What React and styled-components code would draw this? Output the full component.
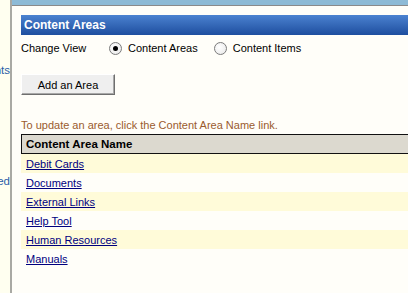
import React from "react";
import styled, { createGlobalStyle } from "styled-components";

const Global = createGlobalStyle`
  html, body { margin: 0; padding: 0; background: #fffef9; }
  body { font-family: "Liberation Sans", Arial, sans-serif; font-size: 11px; }
`;

const Page = styled.div`
  display: flex;
  width: 408px;
  height: 293px;
  overflow: hidden;
  background: #fffef9;
`;

const Sidebar = styled.div`
  width: 10px;
  flex: none;
  background: #fffff0;
  border-right: 2px solid #a9a9a4;
  overflow: hidden;
`;

const SideLink = styled.div`
  display: flex;
  justify-content: flex-end;
  width: 10px;
  white-space: nowrap;
  color: #2a5da8;
  font-size: 11.5px;
  line-height: 14px;
  margin-top: ${(p) => p.$top}px;
  margin-right: ${(p) => p.$shift}px;
`;

const Main = styled.div`
  flex: 1;
  display: flex;
  flex-direction: column;
  min-width: 0;
`;

const TopBar = styled.div`
  height: 5px;
  background: #8dbad6;
  border-bottom: 1px solid #8a8a8a;
`;

const Content = styled.div`
  padding: 9px 0 0 9px;
  display: flex;
  flex-direction: column;
`;

const Title = styled.div`
  height: 20px;
  background: linear-gradient(#4b82d0, #1e4e9f);
  color: #fff;
  font-weight: bold;
  font-size: 12px;
  line-height: 20px;
  padding-left: 3px;
`;

const ViewRow = styled.div`
  display: flex;
  align-items: center;
  height: 24px;
  margin-top: 1px;
  color: #000;
`;

const Label = styled.span`
  width: 88px;
`;

const RadioLabel = styled.label`
  display: flex;
  align-items: center;
  margin-right: ${(p) => p.$mr || 0}px;
`;

const Radio = styled.span`
  width: 11px;
  height: 11px;
  border-radius: 50%;
  border: 1px solid #7b7b7b;
  background: radial-gradient(circle at 40% 40%, #fff, #e6e6e6);
  margin-right: 6px;
  display: flex;
  align-items: center;
  justify-content: center;
  &::after {
    content: "";
    width: 5px;
    height: 5px;
    border-radius: 50%;
    background: ${(p) => (p.$checked ? "#000" : "transparent")};
  }
`;

const Button = styled.button`
  align-self: flex-start;
  margin-top: 14px;
  width: 94px;
  height: 21px;
  padding: 0;
  background: #efefef;
  border: 1px solid;
  border-color: #fff #6f6f6f #6f6f6f #fff;
  box-shadow: inset -1px -1px 0 #a8a8a8;
  font-family: "Liberation Sans", Arial, sans-serif;
  font-size: 11px;
  color: #000;
`;

const Hint = styled.div`
  margin-top: 23px;
  color: #9a5b2e;
  line-height: 14px;
`;

const Table = styled.div`
  margin-top: 2px;
  display: flex;
  flex-direction: column;
`;

const HeadCell = styled.div`
  height: 18px;
  line-height: 18px;
  background: #dcd9cf;
  border: 1px solid #111;
  border-right: none;
  font-weight: bold;
  font-size: 11.5px;
  padding-left: 4px;
  color: #000;
`;

const Row = styled.div`
  height: 19px;
  line-height: 20px;
  padding-left: 5px;
  background: ${(p) => (p.$alt ? "#fffbd9" : "#fffef9")};
`;

const Link = styled.a`
  color: #00007f;
  text-decoration: underline;
`;

const areas = [
  "Debit Cards",
  "Documents",
  "External Links",
  "Help Tool",
  "Human Resources",
  "Manuals",
];

export default function App() {
  return (
    <>
      <Global />
      <Page>
        <Sidebar>
          <SideLink $top={63} $shift={0}>Accounts</SideLink>
          <SideLink $top={97} $shift={-2}>Shared</SideLink>
        </Sidebar>
        <Main>
          <TopBar />
          <Content>
            <Title>Content Areas</Title>
            <ViewRow>
              <Label>Change View</Label>
              <RadioLabel $mr={16}>
                <Radio $checked />
                Content Areas
              </RadioLabel>
              <RadioLabel>
                <Radio />
                Content Items
              </RadioLabel>
            </ViewRow>
            <Button>Add an Area</Button>
            <Hint>To update an area, click the Content Area Name link.</Hint>
            <Table>
              <HeadCell>Content Area Name</HeadCell>
              {areas.map((a, i) => (
                <Row key={a} $alt={i % 2 === 0}>
                  <Link href="#">{a}</Link>
                </Row>
              ))}
            </Table>
          </Content>
        </Main>
      </Page>
    </>
  );
}
